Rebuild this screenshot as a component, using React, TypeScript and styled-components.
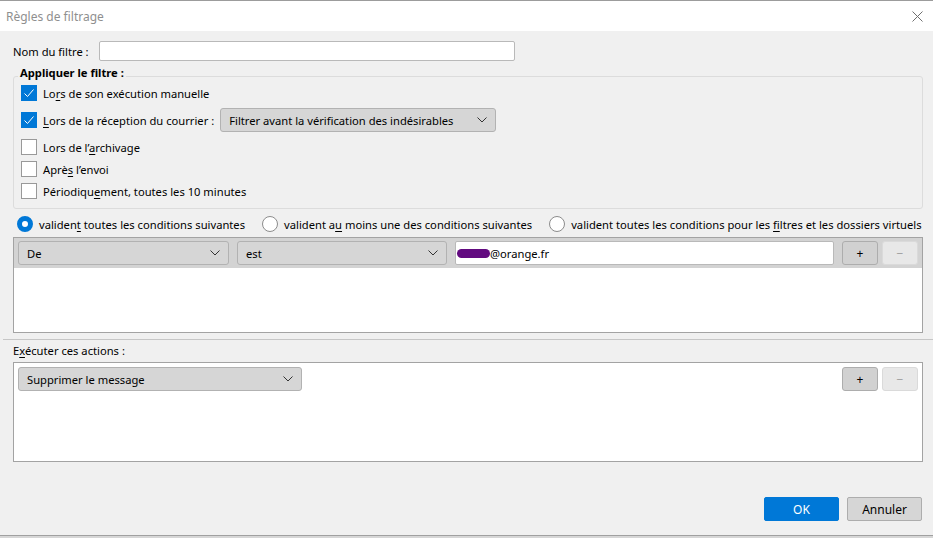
import React from "react";
import styled, { createGlobalStyle } from "styled-components";

const GlobalStyle = createGlobalStyle`
  html, body, #root {
    margin: 0;
    padding: 0;
    height: 100%;
  }
  body {
    background: #f0f0f0;
    color: #000;
    font-family: "Noto Sans", "DejaVu Sans", sans-serif;
    font-size: 11.2px;
  }
  * {
    box-sizing: border-box;
  }
`;

const Window = styled.div`
  display: flex;
  flex-direction: column;
  height: 100%;
`;

const TitleBar = styled.header`
  display: flex;
  align-items: center;
  justify-content: space-between;
  height: 31px;
  padding: 0 10px 0 6px;
  background: #fff;
  border-top: 1px solid #9c9c9c;
  color: #8f8f8f;
  font-size: 12px;
`;

const Content = styled.main`
  display: flex;
  flex-direction: column;
  padding: 10px 10px 0 13px;
`;

const Line = styled.div`
  display: flex;
  align-items: center;
  gap: 10px;
  height: 20px;
`;

const TextInput = styled.div<{ $w?: number }>`
  display: flex;
  align-items: center;
  width: ${(p) => (p.$w ? `${p.$w}px` : "auto")};
  flex: ${(p) => (p.$w ? "none" : "1")};
  height: ${(p) => (p.$w ? "20px" : "24px")};
  padding-left: 1px;
  background: #fff;
  border: 1px solid #b9b9b9;
  border-radius: 2px;
`;

const U = styled.span`
  text-decoration: underline;
  text-underline-offset: 2px;
`;

const Group = styled.section`
  margin-top: 4px;
`;

const GroupTitle = styled.div`
  position: relative;
  width: fit-content;
  margin-left: 5px;
  padding: 0 2px;
  line-height: 15px;
  height: 15px;
  background: #f0f0f0;
  font-weight: bold;
`;

const GroupBox = styled.div`
  display: flex;
  flex-direction: column;
  margin-top: -4px;
  padding: 5px 8px 6px 7px;
  border: 1px solid #dcdcdc;
  border-radius: 3px;
`;

const CheckRow = styled.label<{ $tall?: boolean }>`
  display: flex;
  align-items: center;
  gap: 6px;
  height: ${(p) => (p.$tall ? "24px" : "22px")};
  margin: ${(p) => (p.$tall ? "4px 0" : "0")};
`;

const Box = styled.span<{ $checked?: boolean }>`
  display: inline-flex;
  align-items: center;
  justify-content: center;
  flex: none;
  width: 16px;
  height: 16px;
  background: ${(p) => (p.$checked ? "#0078d7" : "#fff")};
  border: 1px solid ${(p) => (p.$checked ? "#0078d7" : "#999")};
`;

const Select = styled.div<{ $w: number }>`
  display: flex;
  align-items: center;
  justify-content: space-between;
  flex: none;
  width: ${(p) => p.$w}px;
  height: 24px;
  padding: 0 8px;
  background: #d6d6d6;
  border: 1px solid #b2b2b2;
  border-radius: 3px;
`;

const RadioRow = styled.div`
  display: flex;
  align-items: center;
  gap: 17px;
  height: 18px;
  margin-top: 6px;
  padding-left: 4px;
`;

const RadioItem = styled.label`
  display: flex;
  align-items: center;
  gap: 6px;
  white-space: nowrap;
`;

const Radio = styled.span<{ $checked?: boolean }>`
  flex: none;
  width: 16px;
  height: 16px;
  border-radius: 50%;
  background: #fff;
  border: ${(p) => (p.$checked ? "5px solid #0078d7" : "1px solid #8c8c8c")};
`;

const ListBox = styled.div<{ $h: number; $top: number }>`
  display: flex;
  flex-direction: column;
  height: ${(p) => p.$h}px;
  margin-top: ${(p) => p.$top}px;
  background: #fff;
  border: 1px solid #a3a3a3;
`;

const ListRow = styled.div<{ $selected?: boolean }>`
  display: flex;
  align-items: center;
  gap: 8px;
  padding: ${(p) => (p.$selected ? "3px 4px" : "4px")};
  background: ${(p) => (p.$selected ? "#d3d3d3" : "transparent")};
`;

const Buttons = styled.div`
  display: flex;
  gap: 4px;
  margin-left: auto;
`;

const SmallButton = styled.button<{ $disabled?: boolean }>`
  width: 36px;
  height: 24px;
  padding: 0;
  font: inherit;
  font-size: 12px;
  color: ${(p) => (p.$disabled ? "#a0a0a0" : "#000")};
  background: ${(p) => (p.$disabled ? "#e8e8e8" : "#d1d1d1")};
  border: 1px solid ${(p) => (p.$disabled ? "#dadada" : "#adadad")};
  border-radius: 3px;
`;

const Redacted = styled.span`
  display: inline-block;
  width: 33px;
  height: 9px;
  border-radius: 5px;
  background: #620a80;
`;

const Separator = styled.hr`
  margin: 6px -10px 0 -10px;
  border: none;
  border-top: 1px solid #c6c6c6;
`;

const SectionLabel = styled.div`
  margin: 3px 0 4px;
  line-height: 15px;
`;

const Footer = styled.footer`
  display: flex;
  justify-content: flex-end;
  gap: 8px;
  margin: 35px 1px 0 0;
`;

const DialogButton = styled.button<{ $primary?: boolean }>`
  width: 75px;
  height: 24px;
  font: inherit;
  font-size: 12px;
  color: ${(p) => (p.$primary ? "#fff" : "#000")};
  background: ${(p) => (p.$primary ? "#0078d7" : "#d6d6d6")};
  border: 1px solid ${(p) => (p.$primary ? "#0078d7" : "#adadad")};
  border-radius: 2px;
`;

const BottomEdge = styled.div`
  margin-top: auto;
  height: 3px;
  border-top: 1px solid #a0a0a0;
  background: #d6d6d6;
`;

const Chevron = () => (
  <svg width="10" height="6" viewBox="0 0 10 6">
    <path d="M0.5 0.5 L5 5 L9.5 0.5" fill="none" stroke="#333" strokeWidth="1" />
  </svg>
);

const Check = () => (
  <svg width="14" height="14" viewBox="0 0 14 14">
    <path d="M2.5 7.5 L5.5 10.5 L11.5 3.5" fill="none" stroke="#fff" strokeWidth="1" />
  </svg>
);

const CloseIcon = () => (
  <svg width="11" height="11" viewBox="0 0 11 11">
    <path d="M0.5 0.5 L10.5 10.5 M10.5 0.5 L0.5 10.5" stroke="#6f6f6f" strokeWidth="1" />
  </svg>
);

const Dropdown = ({ w, children }: { w: number; children: React.ReactNode }) => (
  <Select $w={w}>
    <span>{children}</span>
    <Chevron />
  </Select>
);

const Checkbox = ({ checked }: { checked?: boolean }) => (
  <Box $checked={checked}>{checked && <Check />}</Box>
);

export default function App() {
  return (
    <>
      <GlobalStyle />
      <Window>
        <TitleBar>
          <span>Règles de filtrage</span>
          <CloseIcon />
        </TitleBar>
        <Content>
          <Line>
            <span>
              Nom du f<U>i</U>ltre :
            </span>
            <TextInput $w={416} />
          </Line>

          <Group>
            <GroupTitle>Appliquer le filtre :</GroupTitle>
            <GroupBox>
              <CheckRow>
                <Checkbox checked />
                <span>
                  Lo<U>r</U>s de son exécution manuelle
                </span>
              </CheckRow>
              <CheckRow $tall>
                <Checkbox checked />
                <span>
                  <U>L</U>ors de la réception du courrier :
                </span>
                <Dropdown w={276}>Filtrer avant la vérification des indésirables</Dropdown>
              </CheckRow>
              <CheckRow>
                <Checkbox />
                <span>
                  Lors de l’<U>a</U>rchivage
                </span>
              </CheckRow>
              <CheckRow>
                <Checkbox />
                <span>
                  Aprè<U>s</U> l’envoi
                </span>
              </CheckRow>
              <CheckRow>
                <Checkbox />
                <span>
                  Périodiqu<U>e</U>ment, toutes les 10 minutes
                </span>
              </CheckRow>
            </GroupBox>
          </Group>

          <RadioRow>
            <RadioItem>
              <Radio $checked />
              <span>
                validen<U>t</U> toutes les conditions suivantes
              </span>
            </RadioItem>
            <RadioItem>
              <Radio />
              <span>
                valident a<U>u</U> moins une des conditions suivantes
              </span>
            </RadioItem>
            <RadioItem>
              <Radio />
              <span>
                valident toutes les conditions pour les <U>f</U>iltres et les dossiers virtuels
              </span>
            </RadioItem>
          </RadioRow>

          <ListBox $h={96} $top={4}>
            <ListRow $selected>
              <Dropdown w={211}>De</Dropdown>
              <Dropdown w={210}>est</Dropdown>
              <TextInput>
                <Redacted />
                <span>@orange.fr</span>
              </TextInput>
              <Buttons>
                <SmallButton>+</SmallButton>
                <SmallButton $disabled>−</SmallButton>
              </Buttons>
            </ListRow>
          </ListBox>

          <Separator />
          <SectionLabel>
            E<U>x</U>écuter ces actions :
          </SectionLabel>

          <ListBox $h={100} $top={0}>
            <ListRow>
              <Dropdown w={284}>Supprimer le message</Dropdown>
              <Buttons>
                <SmallButton>+</SmallButton>
                <SmallButton $disabled>−</SmallButton>
              </Buttons>
            </ListRow>
          </ListBox>

          <Footer>
            <DialogButton $primary>OK</DialogButton>
            <DialogButton>Annuler</DialogButton>
          </Footer>
        </Content>
        <BottomEdge />
      </Window>
    </>
  );
}
